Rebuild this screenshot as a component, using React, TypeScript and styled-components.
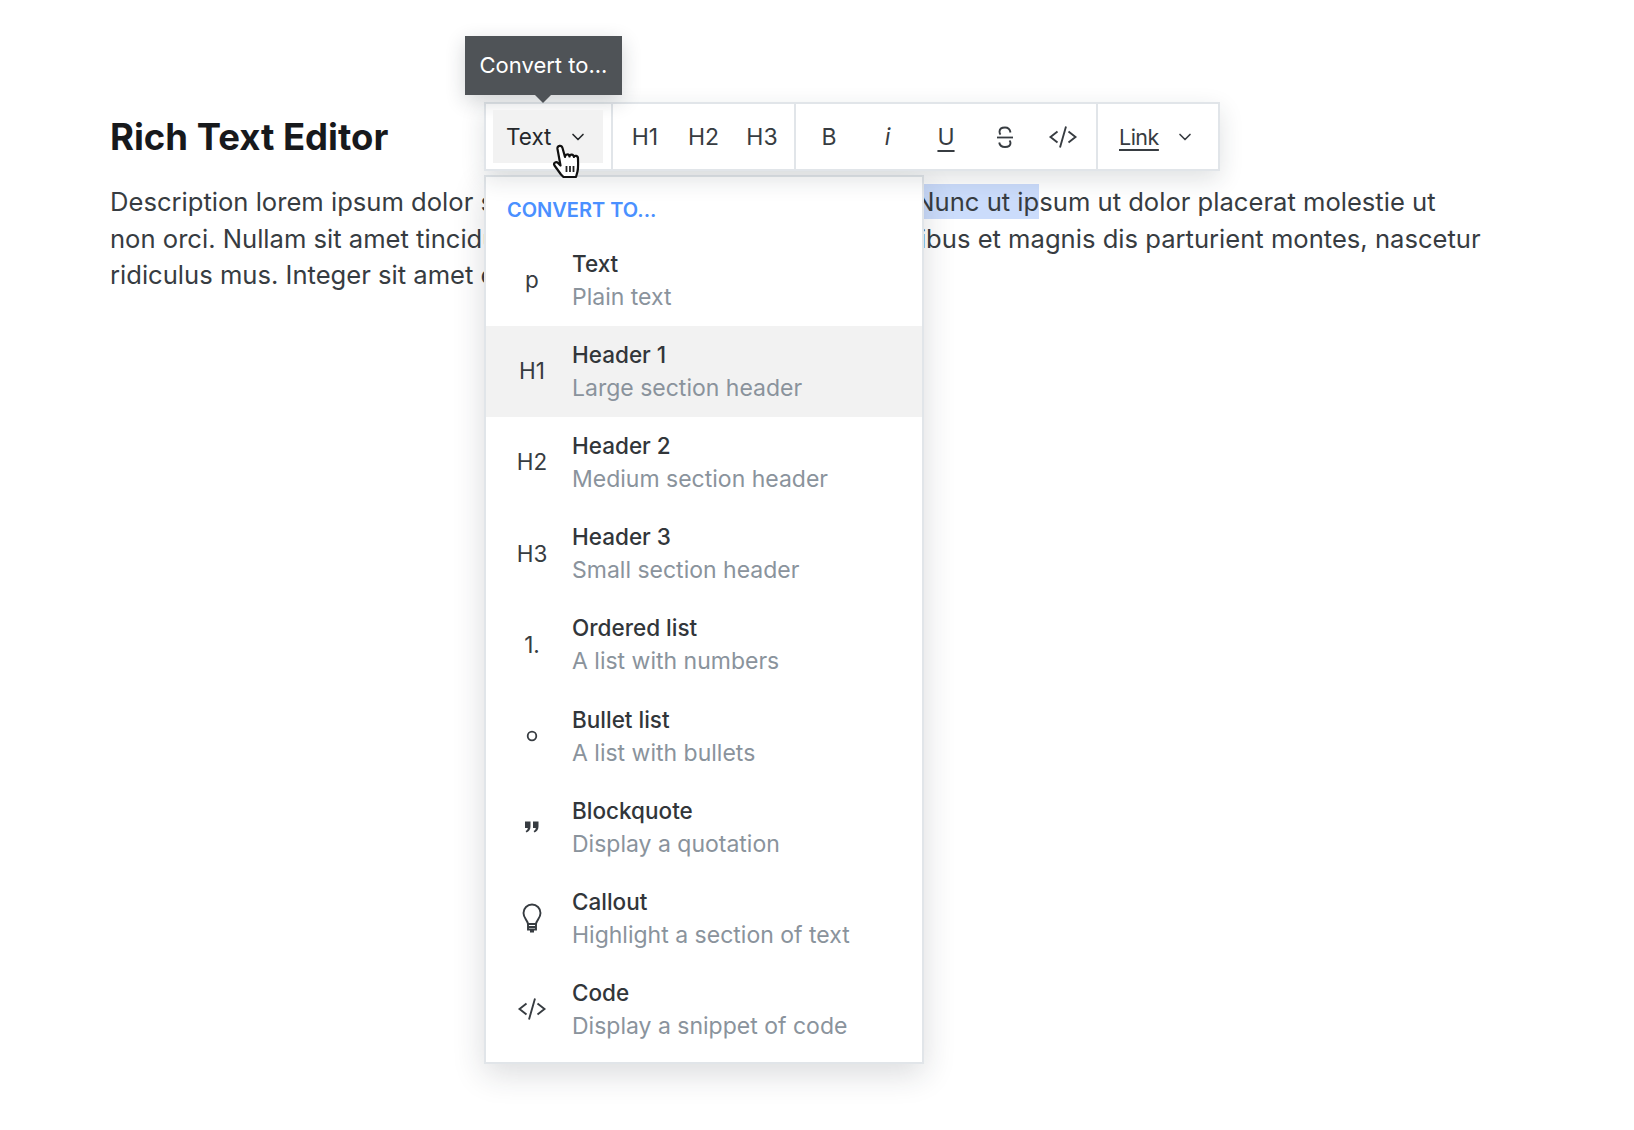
import styled, { createGlobalStyle } from "styled-components";
import { ChevronDown } from "lucide-react";

const GlobalStyle = createGlobalStyle`
  html, body {
    margin: 0;
    background: #fff;
  }
  body {
    font-family: "Inter", "Liberation Sans", sans-serif;
    color: #373c41;
  }
`;

const UI_FONT = `"Inter", "Liberation Sans", sans-serif`;

const CodeIcon = () => (
  <svg width="30" height="24" viewBox="0 0 30 24" fill="none" stroke="currentColor" strokeWidth="1.9">
    <path d="M9.500 6.500 2.500 12l7 5.500M20.500 6.500l7 5.500-7 5.500M18 1.500 12 22.500" />
  </svg>
);

const StrikeIcon = () => (
  <svg width="18" height="24" viewBox="0 0 18 24" fill="none" stroke="currentColor" strokeWidth="1.9">
    <path d="M14.500 7.500C14 4.500 12 2.500 9 2.500 6 2.500 3.500 4 3.500 6.800c0 1 .3 2 1 2.900" />
    <path d="M1 12.500h16" strokeWidth="1.800" />
    <path d="M13.500 15.500c.6.800 1 1.600 1 2.500 0 2.700-2.500 4-5.500 4-3.200 0-5.300-1.500-5.800-4.500" />
  </svg>
);

const QuoteIcon = () => (
  <svg width="14" height="12" viewBox="0 0 14 12" fill="currentColor">
    <path d="M0 .5h5.500v5C5.500 8.500 4 10.500 1.500 11.500L.6 10C2 9.300 2.700 8.300 2.800 7H0zM8 .5h5.500v5c0 3-1.500 5-4 6L8.600 10C10 9.300 10.700 8.300 10.800 7H8z" />
  </svg>
);

const BulbIcon = () => (
  <svg width="22" height="30" viewBox="0 0 22 30" fill="none" stroke="currentColor" strokeWidth="1.900">
    <path d="M7 21C6.500 17 2.500 15.500 2.500 10 2.500 5.300 6.300 1.500 11 1.500s8.500 3.800 8.500 8.500c0 5.500-4 7-4.500 11z" />
    <path d="M7 21v5.500h8V21M7 24h8M9 28.500h4" />
  </svg>
);

const HandCursor = () => (
  <svg width="30" height="36" viewBox="0 0 30 36">
    <path
      d="M9 30.500 2.500 21.500c-1.500-2.500 1.500-4.500 3.500-2.500l2.500 2.500L5.500 5c-.5-3.500 4-4.500 5-1l2.500 9c0-3 4-3.500 4.500-.5.300-2.500 4-2.500 4.500.5.500-2 4-1.500 4 1.500 0 5 .5 9-.5 13l-1.500 5.500H11.500z"
      fill="#fff"
      stroke="#111"
      strokeWidth="2.200"
      strokeLinejoin="round"
    />
    <path d="M14.500 22v6M18 22v6M21.500 22v6" stroke="#222" strokeWidth="1.800" />
  </svg>
);

function BulletDot() {
  return (
    <svg width="12" height="12" viewBox="0 0 12 12" fill="none" stroke="currentColor" strokeWidth="1.800">
      <circle cx="6" cy="6" r="4.300" />
    </svg>
  );
}

const items = [
  { icon: "p", title: "Text", sub: "Plain text" },
  { icon: "H1", title: "Header 1", sub: "Large section header", active: true },
  { icon: "H2", title: "Header 2", sub: "Medium section header" },
  { icon: "H3", title: "Header 3", sub: "Small section header" },
  { icon: "1.", title: "Ordered list", sub: "A list with numbers" },
  { icon: <BulletDot />, title: "Bullet list", sub: "A list with bullets" },
  { icon: <QuoteIcon />, title: "Blockquote", sub: "Display a quotation" },
  { icon: <BulbIcon />, title: "Callout", sub: "Highlight a section of text" },
  { icon: <CodeIcon />, title: "Code", sub: "Display a snippet of code" },
];

export default function App() {
  return (
    <Page>
      <GlobalStyle />
      <Title>Rich Text Editor</Title>
      <Body>
        Description lorem ipsum dolor sit amet, consectetur adipiscing elit <Selected>Nunc ut ip</Selected>sum ut dolor
        placerat molestie ut
        <br />
        non orci. Nullam sit amet tincidunt lectus Orci varius natoque penatibus et magnis dis parturient montes,
        nascetur
        <br />
        ridiculus mus. Integer sit amet est in.
      </Body>

      <Toolbar>
        <Tooltip>Convert to...</Tooltip>
        <TypeGroup>
          <TypeButton>
            Text
            <ChevronDown size={20} strokeWidth={2} />
            <CursorWrap>
              <HandCursor />
            </CursorWrap>
          </TypeButton>
        </TypeGroup>
        <Group $width={183}>
          <ToolText>H1</ToolText>
          <ToolText>H2</ToolText>
          <ToolText>H3</ToolText>
        </Group>
        <Group $width={302}>
          <ToolText>B</ToolText>
          <ToolText $italic>i</ToolText>
          <ToolText $underline>U</ToolText>
          <ToolText>
            <StrikeIcon />
          </ToolText>
          <ToolText>
            <CodeIcon />
          </ToolText>
        </Group>
        <LinkGroup>
          <LinkText>Link</LinkText>
          <ChevronDown size={20} strokeWidth={2} />
        </LinkGroup>
      </Toolbar>

      <Menu>
        <MenuHeading>CONVERT TO...</MenuHeading>
        {items.map((item) => (
          <MenuRow key={item.title} $active={item.active}>
            <RowIcon>{item.icon}</RowIcon>
            <RowText>
              <RowTitle>{item.title}</RowTitle>
              <RowSub>{item.sub}</RowSub>
            </RowText>
          </MenuRow>
        ))}
      </Menu>
    </Page>
  );
}

const Page = styled.div`
  position: relative;
  width: 1634px;
  height: 1130px;
  padding: 112px 0 0 110px;
  box-sizing: border-box;
  overflow: hidden;
`;

const Title = styled.h1`
  margin: 0 0 22px;
  font-size: 36.500px;
  line-height: 50px;
  font-weight: 700;
  color: #17191c;
`;

const Body = styled.p`
  margin: 0;
  font-size: 25.600px;
  line-height: 36.500px;
  color: #373c41;
`;

const Selected = styled.span`
  padding: 2px 0;
  background: #cbdcfb;
`;

const Toolbar = styled.div`
  position: absolute;
  z-index: 2;
  left: 484px;
  top: 102px;
  width: 736px;
  height: 69px;
  box-sizing: border-box;
  display: flex;
  background: #fff;
  border: 2px solid #e1e5e9;
  box-shadow: 0 8px 24px rgba(30, 40, 50, 0.14);
  font-family: ${UI_FONT};
`;

const Tooltip = styled.div`
  position: absolute;
  left: -21px;
  top: -68px;
  width: 157px;
  height: 59px;
  padding-bottom: 2px;
  box-sizing: border-box;
  display: flex;
  align-items: center;
  justify-content: center;
  background: #4f5357;
  color: #fff;
  font-size: 22px;
  box-shadow: 0 6px 20px rgba(30, 40, 50, 0.2);
  &::after {
    content: "";
    position: absolute;
    left: 70px;
    bottom: -8px;
    border-left: 8px solid transparent;
    border-right: 8px solid transparent;
    border-top: 8px solid #4f5357;
  }
`;

const TypeGroup = styled.div`
  flex: 0 0 127px;
  box-sizing: border-box;
  padding: 6px 8px 6px 7px;
  border-right: 2px solid #e1e5e9;
`;

const Group = styled.div<{ $width: number }>`
  flex: 0 0 ${(p) => p.$width}px;
  box-sizing: border-box;
  display: flex;
  align-items: center;
  justify-content: center;
  border-right: 2px solid #e1e5e9;
`;

const TypeButton = styled.div`
  position: relative;
  width: 100%;
  height: 100%;
  display: flex;
  align-items: center;
  gap: 17px;
  padding-left: 13px;
  box-sizing: border-box;
  background: #f2f2f2;
  color: #25282b;
  font-size: 22.500px;
`;

const CursorWrap = styled.span`
  position: absolute;
  left: 59px;
  top: 34px;
  line-height: 0;
`;

const ToolText = styled.span<{ $italic?: boolean; $underline?: boolean }>`
  flex: 0 0 58.500px;
  display: flex;
  justify-content: center;
  align-items: center;
  font-size: 23px;
  color: #373c41;
  font-style: ${(p) => (p.$italic ? "italic" : "normal")};
  text-decoration: ${(p) => (p.$underline ? "underline" : "none")};
  text-underline-offset: 5px;
`;

const LinkGroup = styled.div`
  flex: 1;
  display: flex;
  align-items: center;
  gap: 16px;
  padding-left: 21px;
  color: #373c41;
`;

const LinkText = styled.span`
  font-size: 21.500px;
  letter-spacing: -0.5px;
  text-decoration: underline;
  text-underline-offset: 4px;
`;

const Menu = styled.div`
  position: absolute;
  left: 484px;
  top: 175px;
  width: 440px;
  height: 889px;
  box-sizing: border-box;
  background: #fff;
  border: 2px solid #e1e5e9;
  box-shadow: 0 10px 30px rgba(30, 40, 50, 0.16);
  font-family: ${UI_FONT};
`;

const MenuHeading = styled.div`
  height: 58px;
  padding: 21px 0 0 21px;
  box-sizing: border-box;
  color: #4a90ff;
  font-size: 20px;
  font-weight: 600;
`;

const MenuRow = styled.div<{ $active?: boolean }>`
  height: 91.200px;
  display: flex;
  align-items: center;
  padding-left: 16px;
  background: ${(p) => (p.$active ? "#f2f2f2" : "#fff")};
`;

const RowIcon = styled.div`
  flex: 0 0 60px;
  margin-right: 10px;
  padding-bottom: 2px;
  display: flex;
  justify-content: center;
  align-items: center;
  font-size: 22.500px;
  color: #373c41;
`;

const RowText = styled.div`
  display: flex;
  flex-direction: column;
  gap: 7px;
  padding-bottom: 1px;
`;

const RowTitle = styled.div`
  font-size: 22.500px;
  line-height: 27px;
  font-weight: 500;
  color: #32363a;
`;

const RowSub = styled.div`
  font-size: 23px;
  line-height: 27px;
  color: #8a939c;
`;
